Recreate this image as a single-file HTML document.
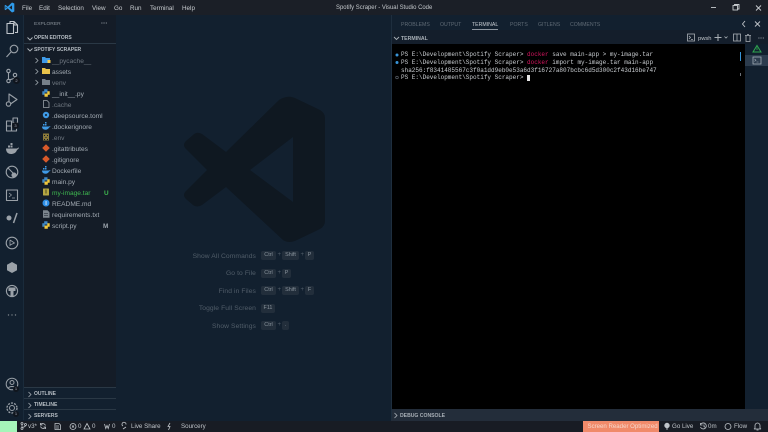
<!DOCTYPE html>
<html><head><meta charset="utf-8"><style>
html,body{margin:0;padding:0;width:768px;height:432px;overflow:hidden;background:#12202f;font-family:"Liberation Sans",sans-serif}
.a{position:absolute}
#root{position:relative;width:768px;height:432px;overflow:hidden;filter:blur(.35px)}
.t{position:absolute;white-space:nowrap;line-height:12px}
.menu{top:2px;font-size:6.300px;line-height:14px;color:#c8ccd0}
.row{position:absolute;left:52px;font-size:6.600px;line-height:11px;height:11px;color:#a3abb3;white-space:nowrap}
.hd{position:absolute;left:34px;font-size:5px;line-height:11px;font-weight:bold;color:#b5bcc3;white-space:nowrap}
.tab{position:absolute;top:20px;font-size:5.200px;line-height:10px;color:#5f6a75;white-space:nowrap}
.lab{position:absolute;right:512px;font-size:6.700px;line-height:10px;color:#515d69;white-space:nowrap;letter-spacing:.1px}
.k{position:absolute;height:9px;line-height:9px;font-size:5.400px;text-align:center;background:#222e3b;color:#8a949d;border-radius:2px}
.pl{position:absolute;font-size:6px;color:#515d69;line-height:9px}
.term{position:absolute;left:401px;font-family:"Liberation Mono",monospace;font-size:6px;line-height:8px;color:#c9cdd1;white-space:pre}
.st{position:absolute;top:420px;font-size:6.200px;line-height:13px;color:#bfc4c9;white-space:nowrap}
svg{position:absolute;overflow:visible}
</style></head><body><div id="root">
<!-- regions -->
<div class="a" style="left:0;top:0;width:768px;height:15px;background:#1b1f27"></div>
<div class="a" style="left:0;top:15px;width:24px;height:405px;background:#12202f;border-right:1px solid #1a2b3b;box-sizing:border-box"></div>
<div class="a" style="left:24px;top:15px;width:92px;height:372px;background:#141c27"></div>
<div class="a" style="left:24px;top:387px;width:92px;height:33px;background:#12202f"></div>
<div class="a" style="left:116px;top:15px;width:275px;height:405px;background:#12202f"></div>
<div class="a" style="left:391px;top:15px;width:377px;height:15px;background:#12202f"></div>
<div class="a" style="left:391px;top:30px;width:377px;height:14px;background:#141e2b"></div>
<div class="a" style="left:391px;top:44px;width:354px;height:365px;background:#000"></div>
<div class="a" style="left:745px;top:44px;width:23px;height:365px;background:#12202f"></div>
<div class="a" style="left:391px;top:409px;width:377px;height:12px;background:#232d3a"></div>
<div class="a" style="left:391px;top:15px;width:1px;height:405px;background:#1e2e3e"></div>
<div class="a" style="left:0;top:421px;width:768px;height:11px;background:#181c24"></div>
<div class="a" style="left:0;top:421px;width:17px;height:11px;background:#a5f5b9"></div>

<!-- title bar -->
<svg style="left:4px;top:2px" width="11" height="11" viewBox="0 0 24 24"><path fill="#2f9bea" d="M17.500 1 8 10 3.500 6.400 1.500 7.400V16.600l2 1L8 14l9.500 9 5-2.400V3.400zM17.500 7.300v9.400L11.500 12zM3.500 9.400 6 12 3.500 14.600z"/></svg>
<div class="t menu" style="left:22px">File</div>
<div class="t menu" style="left:39px">Edit</div>
<div class="t menu" style="left:58px">Selection</div>
<div class="t menu" style="left:92px">View</div>
<div class="t menu" style="left:114px">Go</div>
<div class="t menu" style="left:130px">Run</div>
<div class="t menu" style="left:150px">Terminal</div>
<div class="t menu" style="left:182px">Help</div>
<div class="t" style="left:336px;top:1px;font-size:5.950px;line-height:15px;color:#c3c7cb">Spotify Scraper - Visual Studio Code</div>
<svg style="left:705px;top:3px" width="63" height="10" fill="none" stroke="#c8ccd0" stroke-width=".9"><path d="M6 4.500h5"/><rect x="28" y="2.500" width="4.500" height="4.500"/><path d="M29.500 2.500v-1h4.500v4.500h-1.500"/><path d="M51 2.500l5 5M56 2.500l-5 5"/></svg>

<!-- activity bar icons -->
<svg style="left:0;top:15px" width="24" height="310" fill="none" stroke="#9aa1a8" stroke-width="1.100" stroke-linejoin="round">
<path d="M10 8V6.500h4l3.500 3.500v7.500H15M7 8.500h6.500v10H7z" stroke="#c0c6cc"/><path d="M14 6.500V10h3.500" stroke="#c0c6cc"/>
<circle cx="14" cy="34" r="3.800"/><path d="M11 37l-4.500 5"/>
<circle cx="8.500" cy="56" r="1.700"/><circle cx="8.500" cy="66" r="1.700"/><circle cx="15" cy="60" r="1.700"/><path d="M8.500 58v6M15 62c0 2-4 2-5.500 3"/>
<path d="M9 79v11l8-5.500z"/><circle cx="8.500" cy="89" r="2.200" fill="#12202f"/>
<rect x="6.500" y="106" width="5" height="5"/><rect x="6.500" y="111" width="5" height="5"/><rect x="11.500" y="111" width="5" height="5"/><rect x="13" y="103" width="4.500" height="4.500"/>
<path fill="#9aa1a8" stroke="none" d="M6 133.500h10.500c1 0 1.500-1 2.500-1-.3 1.500-1.500 2-2 2.500-1 3-3.500 4-6 4-3 0-5-2-5-5.500zM8 130.500h2v2H8zM10.500 130.500h2v2h-2zM10.500 128h2v2h-2z"/>
<circle cx="12" cy="157" r="5.800"/><path d="M8 153l8 8"/><circle cx="14" cy="160" r="2" fill="#9aa1a8"/>
<rect x="6.500" y="175" width="11" height="10.500"/><path d="M9 178l2.500 2-2.500 2M12 183h3" stroke-width=".8"/>
<circle cx="9" cy="203" r="2.500" fill="#9aa1a8" stroke="none"/><path d="M17 198l-3.500 10" stroke-width="1.500"/>
<circle cx="12" cy="228" r="5.800"/><path d="M10 225v6M10 225l4.500 3-4.500 2" stroke-width=".8"/>
<path fill="#9aa1a8" stroke="none" d="M12 247l5 2.800v5.400L12 258l-5-2.800v-5.400z"/>
<circle cx="12" cy="276" r="5.600"/><path fill="#9aa1a8" stroke="none" d="M8.500 272.500h7v3.500h-2v5.500h-3v-5.500h-2z"/>
<g fill="#7a828a" stroke="none"><circle cx="8.500" cy="300" r=".7"/><circle cx="12" cy="300" r=".7"/><circle cx="15.500" cy="300" r=".7"/></g>
</svg>
<svg style="left:0;top:375px" width="24" height="45" fill="none" stroke="#9aa1a8" stroke-width="1">
<circle cx="12" cy="9" r="5.800"/><circle cx="12" cy="7.500" r="2"/><path d="M8.500 13c1-2 6-2 7 0"/>
<circle cx="12" cy="33" r="2.500"/><circle cx="12" cy="33" r="5" stroke-dasharray="2 1.200" stroke-width="1.300"/>
</svg>
<div class="a" style="left:13px;top:77px;width:7px;height:7px;border-radius:4px;background:#10161e;color:#aab;font-size:4px;line-height:7px;text-align:center">2</div>
<div class="a" style="left:12px;top:122px;width:7px;height:7px;border-radius:4px;background:#10161e;color:#aab;font-size:4px;line-height:7px;text-align:center">3</div>
<div class="a" style="left:13px;top:386px;width:6px;height:6px;border-radius:3px;background:#10161e;color:#aab;font-size:4px;line-height:6px;text-align:center">1</div>
<div class="a" style="left:13px;top:411px;width:6px;height:6px;border-radius:3px;background:#10161e;color:#aab;font-size:4px;line-height:6px;text-align:center">1</div>

<!-- sidebar -->
<div class="t" style="left:34px;top:19px;font-size:4.900px;color:#8a929a">EXPLORER</div>
<div class="t" style="left:101px;top:19px;font-size:6.500px;color:#aab0b6;font-weight:bold;line-height:9px">···</div>
<div class="a" style="left:24px;top:43px;width:92px;height:1px;background:#2a3845"></div>
<svg style="left:26px;top:36px" width="8" height="20" fill="none" stroke="#b0b7bd" stroke-width=".9"><path d="M1.500 1.500l2.500 2.500 2.500-2.500M1.500 12.500l2.500 2.500 2.500-2.500"/></svg>
<div class="hd" style="top:33px">OPEN EDITORS</div>
<div class="hd" style="top:45px">SPOTIFY SCRAPER</div>
<svg style="left:34px;top:57px" width="6" height="32" fill="none" stroke="#a0a7ae" stroke-width=".8"><path d="M1.500 1l2.500 2.500L1.500 6M1.500 12l2.500 2.500L1.500 17M1.500 23l2.500 2.500L1.500 28"/></svg>
<!-- file icons: each group centred on its row -->
<svg style="left:41px;top:56px" width="12" height="176" stroke="none">
<g transform="translate(0,4)"><path fill="#3f9ae6" d="M1-3h3l1 1h4v5H1z"/><path fill="#f2c94c" d="M6.500 0h3v3h-3z"/></g>
<g transform="translate(0,15)"><path fill="#e8c24a" d="M1-3h3l1 1h4v5H1z"/></g>
<g transform="translate(0,26)"><path fill="#76808a" d="M1-3h3l1 1h4v5H1z"/></g>
<g transform="translate(0,37)"><path fill="#3f88c5" d="M3.200-3.800h3.300v3.300H3.700v2.300H1.300V-1.800h1.900z"/><path fill="#f0c83c" d="M6.800 3.800H3.500V.5h2.800v-2.300h2.400V1.800H6.800z"/></g>
<g transform="translate(0,48)"><path fill="none" stroke="#9aa1a8" stroke-width=".8" d="M2.500-3.500H6l2 2V3.500H2.500z"/></g>
<g transform="translate(0,59)"><circle cx="5" cy="0" r="3.200" fill="#3f9ae6"/><circle cx="5" cy="0" r="1" fill="#141c27"/></g>
<g transform="translate(0,70)"><path fill="#3f9ae6" d="M1 .5h7c.5 0 1-.5 1.500-.5-.3 1-1 1.500-1.500 1.500C7.500 3 6 3.700 4.500 3.700c-2 0-3.500-1-3.500-3.200zM2-2h1.500v1.500H2zM4-2h1.500v1.500H4zM4-4h1.500v1.500H4z"/></g>
<g transform="translate(0,81)"><path fill="#8c7a3a" d="M2-3.500h6v7H2z"/><path fill="#141c27" d="M3-2h1v1H3zM6-2h1v1H6zM4.500 0h1v1h-1zM3 2h1v1H3zM6 2h1v1H6z"/></g>
<g transform="translate(0,92)"><path fill="#d95a2a" d="M5-3.800 8.800 0 5 3.800 1.200 0z"/></g>
<g transform="translate(0,103)"><path fill="#d95a2a" d="M5-3.800 8.800 0 5 3.800 1.200 0z"/></g>
<g transform="translate(0,114)"><path fill="#3f9ae6" d="M1 .5h7c.5 0 1-.5 1.500-.5-.3 1-1 1.500-1.500 1.500C7.500 3 6 3.700 4.500 3.700c-2 0-3.500-1-3.500-3.200zM2-2h1.500v1.500H2zM4-2h1.500v1.500H4zM4-4h1.500v1.500H4z"/></g>
<g transform="translate(0,125)"><path fill="#3f88c5" d="M3.200-3.800h3.300v3.300H3.700v2.300H1.300V-1.800h1.900z"/><path fill="#f0c83c" d="M6.800 3.800H3.500V.5h2.800v-2.300h2.400V1.800H6.800z"/></g>
<g transform="translate(0,136)"><rect x="2" y="-3.500" width="6" height="7" rx=".5" fill="#b5a642"/><path fill="#4a4a20" d="M4.500-2.500h1v4h-1z"/></g>
<g transform="translate(0,147)"><circle cx="5" cy="0" r="3.500" fill="#2f8fe6"/><path fill="#dcecff" d="M4.600-2h.9v4h-.9z"/></g>
<g transform="translate(0,158)"><path fill="#7c858e" d="M2-3.800h4.500l2 2v5.600H2z"/><path fill="#141c27" d="M3-.8h4v.6H3zM3 1.200h4v.6H3z"/></g>
<g transform="translate(0,169)"><path fill="#3f88c5" d="M3.200-3.800h3.300v3.300H3.700v2.300H1.300V-1.800h1.900z"/><path fill="#f0c83c" d="M6.800 3.800H3.500V.5h2.800v-2.300h2.400V1.800H6.800z"/></g>
</svg>
<div class="row" style="top:56px;color:#6f7780">__pycache__</div>
<div class="row" style="top:67px">assets</div>
<div class="row" style="top:78px;color:#6f7780">venv</div>
<div class="row" style="top:89px">__init__.py</div>
<div class="row" style="top:100px;color:#6f7780">.cache</div>
<div class="row" style="top:111px">.deepsource.toml</div>
<div class="row" style="top:122px">.dockerignore</div>
<div class="row" style="top:133px;color:#6f7780">.env</div>
<div class="row" style="top:144px">.gitattributes</div>
<div class="row" style="top:155px">.gitignore</div>
<div class="row" style="top:166px">Dockerfile</div>
<div class="row" style="top:177px">main.py</div>
<div class="row" style="top:188px;color:#3fb950">my-image.tar</div>
<div class="row" style="top:199px">README.md</div>
<div class="row" style="top:210px">requirements.txt</div>
<div class="row" style="top:221px">script.py</div>
<div class="t" style="left:104px;top:188px;font-size:6.400px;line-height:11px;color:#3fb950;font-weight:bold">U</div>
<div class="t" style="left:103px;top:221px;font-size:6.400px;line-height:11px;color:#9ba3ab;font-weight:bold">M</div>
<!-- bottom sections -->
<div class="a" style="left:24px;top:387px;width:92px;height:1px;background:#2a3845"></div>
<div class="a" style="left:24px;top:398px;width:92px;height:1px;background:#2a3845"></div>
<div class="a" style="left:24px;top:409px;width:92px;height:1px;background:#2a3845"></div>
<svg style="left:27px;top:391px" width="6" height="30" fill="none" stroke="#a0a7ae" stroke-width=".8"><path d="M1.500 1l2.500 2.500L1.500 6M1.500 12l2.500 2.500L1.500 17M1.500 23l2.500 2.500L1.500 28"/></svg>
<div class="hd" style="top:389px">OUTLINE</div>
<div class="hd" style="top:400px">TIMELINE</div>
<div class="hd" style="top:411px">SERVERS</div>

<!-- watermark -->
<svg style="left:0;top:0" width="768" height="432"><path fill="#0f1821" d="M279 100Q288 94 297 99L320 110Q325 113 325 118V221Q325 226 320 229L297 240Q289 244 283 240L226 187 202 205Q197 208 193 205L186 199Q182 195 186 191L207 170 186 149Q182 145 186 141L193 135Q197 131 202 134L226 152zM293 137 250 170 293 202z"/></svg>

<!-- shortcuts -->
<div class="lab" style="top:252px">Show All Commands</div>
<div class="k" style="left:261px;top:251px;width:15px">Ctrl</div><div class="pl" style="left:277.500px;top:251px">+</div>
<div class="k" style="left:282px;top:251px;width:17px">Shift</div><div class="pl" style="left:300.500px;top:251px">+</div>
<div class="k" style="left:305px;top:251px;width:9px">P</div>
<div class="lab" style="top:269px">Go to File</div>
<div class="k" style="left:261px;top:269px;width:15px">Ctrl</div><div class="pl" style="left:277.500px;top:269px">+</div>
<div class="k" style="left:282px;top:269px;width:9px">P</div>
<div class="lab" style="top:287px">Find in Files</div>
<div class="k" style="left:261px;top:286px;width:15px">Ctrl</div><div class="pl" style="left:277.500px;top:286px">+</div>
<div class="k" style="left:282px;top:286px;width:17px">Shift</div><div class="pl" style="left:300.500px;top:286px">+</div>
<div class="k" style="left:305px;top:286px;width:9px">F</div>
<div class="lab" style="top:304px">Toggle Full Screen</div>
<div class="k" style="left:261px;top:304px;width:14px">F11</div>
<div class="lab" style="top:322px">Show Settings</div>
<div class="k" style="left:261px;top:321px;width:15px">Ctrl</div><div class="pl" style="left:277.500px;top:321px">+</div>
<div class="k" style="left:282px;top:321px;width:7px">.</div>

<!-- panel tabs -->
<div class="tab" style="left:401px">PROBLEMS</div>
<div class="tab" style="left:440px">OUTPUT</div>
<div class="tab" style="left:472px;color:#c5cad0">TERMINAL</div>
<div class="a" style="left:472px;top:29px;width:26px;height:1px;background:#8d96a0"></div>
<div class="tab" style="left:510px">PORTS</div>
<div class="tab" style="left:538px">GITLENS</div>
<div class="tab" style="left:570px">COMMENTS</div>
<svg style="left:738px;top:19px" width="26" height="10" fill="none" stroke="#c0c5ca" stroke-width=".9"><path d="M7 2l-2.500 3L7 8M17 2.500l5 5M22 2.500l-5 5"/></svg>
<!-- terminal header -->
<svg style="left:393px;top:35px" width="7" height="7" fill="none" stroke="#aab0b6" stroke-width=".9"><path d="M1 2l2.500 2.500L6 2"/></svg>
<div class="t" style="left:401px;top:33px;font-size:5.200px;font-weight:bold;color:#a8afb6">TERMINAL</div>
<svg style="left:686px;top:34px" width="82" height="10" fill="none" stroke="#aab0b6" stroke-width=".8"><rect x="1.500" y="0" width="7" height="7"/><path d="M3 2l1.500 1.500L3 5M5 5.500h2"/><path d="M32 0v7M28.500 3.500h7" stroke-width="1"/><path d="M38.500 2.500l1.500 1.500 1.500-1.500"/><rect x="47.500" y="0" width="7" height="7"/><path d="M51 0v7"/><path d="M59 1.500h6M60 1.500v6h4v-6M61 .5h2"/></svg>
<div class="t" style="left:698px;top:33px;font-size:5.800px;color:#c0c5ca">pwsh</div>
<div class="t" style="left:758px;top:33px;font-size:6.500px;color:#aab0b6;font-weight:bold">···</div>

<!-- terminal -->
<svg style="left:392px;top:50px" width="8" height="32"><circle cx="5" cy="5" r="1.500" fill="#3794d8"/><circle cx="5" cy="12.500" r="1.500" fill="#3794d8"/><circle cx="5" cy="27.500" r="1.300" fill="none" stroke="#68707a" stroke-width=".6"/></svg>
<div class="term" style="top:51px">PS E:\Development\Spotify Scraper&gt; <span style="color:#d6155f">docker</span> save main-app &gt; my-image.tar</div>
<div class="term" style="top:59px">PS E:\Development\Spotify Scraper&gt; <span style="color:#d6155f">docker</span> import my-image.tar main-app</div>
<div class="term" style="top:67px">sha256:f8341485567c3f0a1dd9eb0e53a6d3f16727a807bcbc6d5d300c2f43d16be747</div>
<div class="term" style="top:74px">PS E:\Development\Spotify Scraper&gt; </div>
<div class="a" style="left:527px;top:75px;width:3px;height:6px;background:#e6e6e6"></div>
<div class="a" style="left:740px;top:52px;width:1px;height:9px;background:#3794d8"></div>
<div class="a" style="left:740px;top:73px;width:1px;height:3px;background:#6a7078"></div>
<!-- right rail -->
<div class="a" style="left:745px;top:55px;width:23px;height:11px;background:#2c3c4e"></div>
<svg style="left:751px;top:44px" width="12" height="22" fill="none"><path d="M6 1.500l4 6.500H2z" stroke="#2fa84f" stroke-width="1"/><path d="M6 3.500v2.500" stroke="#2fa84f" stroke-width=".8"/><rect x="2" y="13" width="8" height="7" stroke="#a6b0ba" stroke-width=".8"/><path d="M3.500 15l1.500 1.200-1.500 1.200M5.500 18h2" stroke="#a6b0ba" stroke-width=".6"/></svg>
<!-- debug console -->
<svg style="left:393px;top:412px" width="6" height="7" fill="none" stroke="#aab0b6" stroke-width=".8"><path d="M1.500 1l2.500 2.500L1.500 6"/></svg>
<div class="t" style="left:400px;top:410px;font-size:5.100px;line-height:12px;font-weight:bold;color:#a8afb6">DEBUG CONSOLE</div>

<!-- status bar -->
<svg style="left:20px;top:421px" width="200" height="11" fill="none" stroke="#bfc4c9" stroke-width=".8">
<circle cx="2" cy="2.500" r="1"/><circle cx="2" cy="7.500" r="1"/><circle cx="5.500" cy="3.500" r="1"/><path d="M2 3.500v3M5.500 4.500C5.500 6 3 6 2.500 6.500"/>
<path d="M20.500 3.500a3 3 0 0 1 5 1M25.500 6.500a3 3 0 0 1-5-1M20.500 2v2h2M25.500 8V6h-2"/>
<path d="M35 2.500h4l1.500 1.500v4.500H35zM36 5h3M36 7h3"/>
<circle cx="53" cy="5.500" r="3"/><path d="M52 4.500l2 2M54 4.500l-2 2"/>
<path d="M67 2.500l3 5.500h-6z"/>
<path d="M84.500 3l1.300 4.500 1.200-3 1.200 3L89.500 3"/>
<path d="M103 5a2 2 0 1 1 3-1.500M106 6l-3 2"/>
<path d="M150 2l-2 3.500h2l-1.500 3.500"/>
</svg>
<div class="st" style="left:28px">v3*</div>
<div class="st" style="left:78px">0</div>
<div class="st" style="left:92px">0</div>
<div class="st" style="left:112px">0</div>
<div class="st" style="left:131px">Live Share</div>
<div class="st" style="left:181px">Sourcery</div>
<div class="a" style="left:583px;top:421px;width:76px;height:11px;background:#f08a6a"></div>
<div class="st" style="left:587.500px;color:#f6d8cc;font-size:6.100px">Screen Reader Optimized</div>
<svg style="left:662px;top:421px" width="106" height="11" fill="none" stroke="#bfc4c9" stroke-width=".8">
<circle cx="5" cy="4.500" r="2.300" fill="#bfc4c9"/><path d="M4 8h2"/>
<path d="M39 3a3 3 0 1 1-.5 3M38.500 2v2h2M42 3.500V5.500l1.200 .8"/>
<circle cx="66" cy="5.500" r="3"/>
<path d="M93 7.500V4.500a2.500 2.500 0 0 1 5 0v3l1 .5h-7zM94.500 9h2"/>
</svg>
<div class="st" style="left:672px">Go Live</div>
<div class="st" style="left:708px">0m</div>
<div class="st" style="left:734px">Flow</div>
</div></body></html>
